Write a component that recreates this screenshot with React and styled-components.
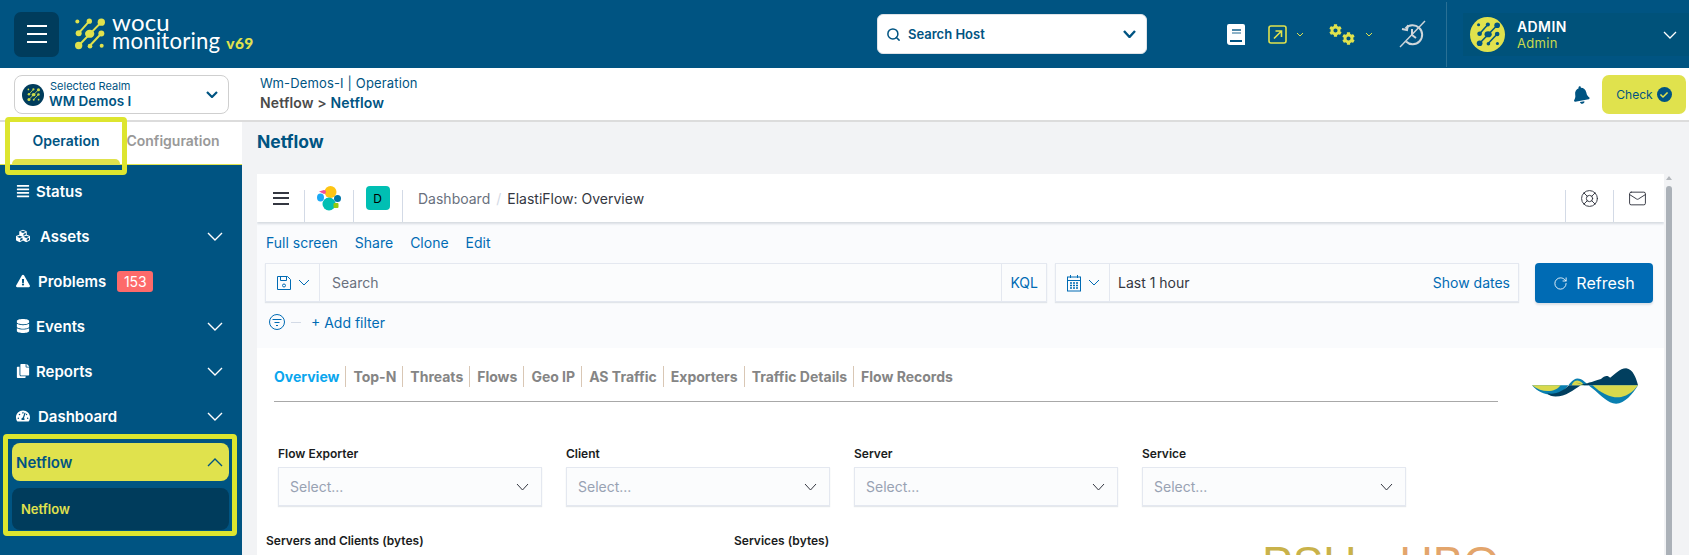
import React from 'react';
import styled, { createGlobalStyle } from 'styled-components';
import { FaAlignJustify, FaCubes, FaExclamationTriangle, FaDatabase, FaCopy, FaTachometerAlt, FaCog, FaBell, FaCheck } from 'react-icons/fa';
import { LifeBuoy, Mail, Search, RotateCw } from 'lucide-react';

const BLUE = '#005482';
const DARK = '#003c5c';
const YEL = '#e0e24d';
const MARK = '#dde52f';
const FONT = `Inter, "Noto Sans", sans-serif`;

const Global = createGlobalStyle`
  html, body { margin: 0; padding: 0; height: 100%; overflow: hidden; background: #f2f3f5; }
  body { font-family: ${FONT}; }
  * { box-sizing: border-box; }
`;

const Page = styled.div`
  width: 1689px; height: 555px; overflow: hidden; display: flex; flex-direction: column;
`;

/* header */
const Header = styled.header`
  height: 68px; flex: none; background: ${BLUE}; display: flex;
`;
const Brand = styled.div`
  width: 877px; padding-left: 14px; display: flex; align-items: center; gap: 15px;
`;
const MenuBtn = styled.button`
  width: 45px; height: 45px; border: 0; border-radius: 7px; background: ${DARK};
  display: flex; flex-direction: column; gap: 6px; align-items: center; justify-content: center; padding: 0;
  span { width: 20px; height: 2px; background: #fff; display: block; }
`;
const LogoGroup = styled.div`
  display: flex; align-items: center;
`;
const LogoText = styled.div`
  margin: 0 0 4px 7px; color: #fff; font-family: Lato, sans-serif;
  display: flex; flex-direction: column;
`;
const LogoWord = styled.div`
  font-size: ${p => p.$fs}px; line-height: 19px; letter-spacing: ${p => p.$ls}px; font-weight: 400;
`;
const LogoVer = styled.span`
  color: ${YEL}; font-size: 15.5px; font-weight: 900; margin-left: 6px; letter-spacing: 0.3px;
`;
const HostSearch = styled.div`
  width: 270px; height: 40px; margin-top: 14px; background: #fff; border-radius: 6px; border: 1px solid #dfe3e8;
  display: flex; align-items: center; padding: 0 10px 0 8px; color: ${BLUE};
  font-size: 13px; font-weight: 600; gap: 7px;
  span { flex: 1; }
`;
const HeaderTools = styled.div`
  width: 299px; display: flex; align-items: center; padding-left: 80px; color: #fff;
`;
const ToolGap = styled.span`
  display: inline-flex; margin-left: ${p => p.$ml}px;
`;
const Gears = styled.span`
  display: inline-flex; height: 21px; margin-left: 25px; color: ${YEL};
  svg:first-child { align-self: flex-start; }
  svg:last-child { align-self: flex-end; }
`;
const UserArea = styled.div`
  flex: 1; border-left: 1px solid #2a7095; margin: 2px 0 1px; display: flex; align-items: center; padding-left: 16px;
`;
const UserPanel = styled.div`
  flex: 1; height: 43px; background: #00527a; display: flex; align-items: center; padding: 0 12px 0 7px;
`;
const Avatar = styled.div`
  width: 35px; height: 35px; border-radius: 50%; background: ${YEL}; display: flex; align-items: center; justify-content: center; flex: none;
`;
const UserText = styled.div`
  margin-left: 12px; flex: 1; display: flex; flex-direction: column; gap: 1px;
  b { color: #fff; font-size: 14px; line-height: 16px; font-weight: 600; letter-spacing: .4px; }
  span { color: #c9da4e; font-size: 13px; line-height: 14px; letter-spacing: .3px; }
`;

/* sub bar */
const SubBar = styled.div`
  height: 54px; flex: none; background: #fff; border-bottom: 2px solid #dcdcdc; display: flex; align-items: flex-start;
`;
const RealmCell = styled.div`
  width: 242px; flex: none; padding: 7px 0 0 14px;
`;
const Realm = styled.div`
  width: 215px; height: 39px; border: 1px solid #cfcfcf; border-radius: 8px; display: flex; align-items: center; padding: 0 10px 0 7px;
`;
const RealmBadge = styled.div`
  width: 22px; height: 22px; border-radius: 50%; background: ${DARK}; flex: none; display: flex; align-items: center; justify-content: center;
`;
const RealmText = styled.div`
  flex: 1; margin-left: 5px; display: flex; flex-direction: column; color: ${BLUE};
  small { font-size: 11px; line-height: 13px; margin-left: 1px; }
  b { font-size: 13.5px; line-height: 16px; font-weight: 600; }
`;
const Crumbs = styled.div`
  flex: 1; padding: 5px 0 0 18px; font-size: 13px; line-height: 20px; color: ${BLUE}; letter-spacing: .15px;
  b { font-weight: 600; display: block; font-size: 14px; letter-spacing: .15px; }
  i { font-style: normal; color: #4a4a4a; }
`;
const Actions = styled.div`
  display: flex; align-items: center; height: 52px; padding: 7px 3px 6px 0; color: ${BLUE};
`;
const Bell = styled(FaBell)`
  transform: rotate(-10deg);
`;
const CheckBtn = styled.div`
  width: 84px; height: 39px; margin-left: 12px; background: ${YEL}; border-radius: 7px; display: flex; align-items: center; justify-content: center; gap: 4px;
  font-size: 12px; color: ${BLUE};
`;
const CheckDot = styled.span`
  width: 15px; height: 15px; border-radius: 50%; background: ${BLUE}; display: flex; align-items: center; justify-content: center; color: #fff;
`;

/* body */
const Body = styled.div`
  flex: 1; min-height: 0; display: flex;
`;
const Side = styled.aside`
  width: 242px; flex: none; background: ${BLUE}; position: relative; display: flex; flex-direction: column;
`;
const Tabs = styled.div`
  height: 43px; background: #fff; border-bottom: 1px solid ${YEL}; display: flex; flex: none;
`;
const Tab = styled.div`
  width: ${p => p.$w}px; margin-left: ${p => p.$ml || 0}px; text-align: center; padding-top: 10px; font-size: 14px; font-weight: 600; position: relative;
  color: ${p => (p.$on ? BLUE : '#999')};
  ${p => p.$on && `&::after { content: ''; position: absolute; left: 12px; right: 12px; bottom: -1px; height: 6px; background: ${YEL}; border-radius: 5px 5px 0 0; }`}
`;
const Nav = styled.nav`
  display: flex; flex-direction: column; gap: 7px; padding: 7px 13px 0 12px;
`;
const NavRow = styled.div`
  height: 38px; flex: none; display: flex; align-items: center; padding: 0 6px 0 4px;
  gap: ${p => p.$gap || 8}px; border-radius: 8px;
  font-size: 15px; font-weight: 600;
  color: ${p => (p.$open ? BLUE : '#fff')};
  background: ${p => (p.$open ? YEL : 'transparent')};
  margin-top: ${p => (p.$open ? 1 : 0)}px;
`;
const NavLabel = styled.span`
  flex: ${p => (p.$grow ? 1 : 'none')};
`;
const Badge = styled.span`
  background: #fd6a6a; color: #fff; border-radius: 3px; font-size: 14px; font-weight: 400; width: 36px; height: 21px;
  display: flex; align-items: center; justify-content: center; margin-left: 3px;
`;
const SubItem = styled.div`
  height: 42px; border-radius: 8px; background: ${DARK}; color: ${YEL}; font-size: 13px; font-weight: 600;
  display: flex; align-items: center; padding-left: 9px;
`;
const MarkBox = styled.div`
  position: absolute; left: ${p => p.$x}px; top: ${p => p.$y}px; width: ${p => p.$w}px; height: ${p => p.$h}px;
  border: 5px solid ${MARK}; border-radius: 4px; pointer-events: none;
`;

/* main */
const Main = styled.main`
  flex: 1; min-width: 0; display: flex; flex-direction: column; background: #f2f3f5;
`;
const Title = styled.h1`
  margin: 0; height: 52px; flex: none; padding: 8px 0 0 15px; font-size: 17.5px; line-height: 24px; font-weight: 700; color: ${BLUE};
`;
const Frame = styled.div`
  flex: 1; min-height: 0; display: flex; margin-left: 15px;
`;
const Kibana = styled.div`
  width: 1407px; flex: none; background: #fff; overflow: hidden;
`;
const Scroll = styled.div`
  flex: 1; padding: 2px 0 0 2px; display: flex; flex-direction: column;
  i { width: 0; height: 0; border: 3px solid transparent; border-top: 0; border-bottom: 4px solid #b4b8bd; margin-left: 0; }
  b { display: block; width: 6px; flex: 1; margin-top: 6px; background: #abb1b8; border-radius: 3px 3px 0 0; }
`;
const TopNav = styled.div`
  height: 48px; background: #fff; box-shadow: 0 2px 2px rgba(152,162,179,.35); display: flex; align-items: center; padding-right: 3px;
  position: relative; z-index: 1;
`;
const NavCell = styled.div`
  width: ${p => p.$w}px; height: 48px; flex: none; display: flex; align-items: center; justify-content: center;
  ${p => p.$grow && 'flex: 1; justify-content: flex-start; padding-left: 16px; gap: 5px;'}
  background: ${p => p.$plain ? 'none' : 'linear-gradient(#d3dae6,#d3dae6) left bottom / 1px 32px no-repeat'};
  color: #343741; font-size: 14px;
  em { font-style: normal; color: #69707d; }
  u { text-decoration: none; color: #d3dae6; margin: 0 1px; }
`;
const Burger = styled.div`
  width: 16px; display: flex; flex-direction: column; gap: 3.5px;
  span { height: 2px; background: #343741; display: block; }
`;
const Space = styled.div`
  width: 24px; height: 24px; border-radius: 4px; background: #00bfb3; color: #000; font-size: 12px; display: flex; align-items: center; justify-content: center;
`;
const ToolArea = styled.div`
  height: 126px; background: #fafbfd; padding: 12px 8px 0 8px;
`;
const LinkRow = styled.div`
  height: 18px; display: flex; gap: 17px; padding-left: 1px; font-size: 14px; line-height: 18px; color: #006bb4;
`;
const BarRow = styled.div`
  display: flex; margin-top: 11px; height: 40px;
`;
const Bar = styled.div`
  width: ${p => p.$w}px; margin-right: ${p => p.$mr}px; flex: none; height: 39px; border: 1px solid #e4e8f0; display: flex; align-items: center;
  box-shadow: 0 1px 1px rgba(152,162,179,.25); background: #fbfcfd; font-size: 14px;
`;
const Prepend = styled.div`
  width: 54px; height: 100%; flex: none; border-right: 1px solid #e4e8f0; display: flex; align-items: center; justify-content: center; gap: 6px; color: #006bb4;
`;
const BarText = styled.div`
  flex: 1; padding-left: ${p => p.$pl}px; color: ${p => p.$c};
`;
const BarLink = styled.div`
  height: 100%; display: flex; align-items: center; padding: 0 8px; color: #006bb4;
  ${p => p.$div && 'border-left: 1px solid #e4e8f0;'}
`;
const RefreshBtn = styled.div`
  width: 118px; height: 40px; background: #006bb4; color: #fff; border-radius: 4px; font-size: 16px; display: flex; align-items: center; justify-content: center; gap: 8px;
  box-shadow: 0 2px 2px rgba(152,162,179,.3);
`;
const FilterRow = styled.div`
  display: flex; align-items: center; height: 22px; margin-top: 8px; padding-left: 4px; color: #006bb4; font-size: 14px;
  hr { width: 10px; height: 1px; background: #d3dae6; border: 0; margin: 0 10px 0 6px; }
`;
const Dash = styled.div`
  background: #fff;
`;
const TabHead = styled.div`
  display: flex; padding: 18px 0 0 17px; height: 64px;
`;
const TabCol = styled.div`
  width: 1224px; flex: none; height: 36px; border-bottom: 1px solid #a8a8a8; display: flex; align-items: flex-start;
`;
const DTab = styled.span`
  font-size: 14px; font-weight: 700; line-height: 21px; white-space: nowrap;
  color: ${p => (p.$on ? '#0aa6ee' : '#858585')};
  padding-right: 6px; margin-right: 7px;
  border-right: ${p => (p.$last ? '0' : '1px solid #d9c7b5')};
`;
const Wave = styled.div`
  margin: 2px 0 0 34px;
`;
const FilterGrid = styled.div`
  display: flex; padding: 34px 0 0 21px; gap: 24px;
`;
const Field = styled.div`
  width: 264px; flex: none;
`;
const FieldLabel = styled.div`
  font-size: 12px; font-weight: 600; line-height: 16px; color: #1a1c21; height: 21px;
`;
const SelectBox = styled.div`
  height: 39px; border: 1px solid #e4e8f0; background: #fbfcfd; box-shadow: 0 1px 1px rgba(152,162,179,.25);
  display: flex; align-items: center; justify-content: space-between; padding: 0 12px 0 11px; font-size: 14px; color: #98a2b3;
`;
const TitlesRow = styled.div`
  display: flex; padding: 27px 0 0 9px; align-items: flex-start;
`;
const PanelTitle = styled.div`
  width: ${p => p.$w}px; flex: none; font-size: 12px; font-weight: 600; line-height: 16px; color: #1a1c21;
`;
const Big = styled.div`
  font-family: "Liberation Sans", sans-serif; font-size: 46px; line-height: 46px; font-weight: 400; white-space: pre; margin-top: 7px;
  span + span { margin-left: 43px; }
`;
const BigPart = styled.span`
  color: ${p => p.$c};
`;

/* drawings */
const Chevron = ({ w = 16, h = 9, c = '#fff', sw = 1.4 }) => (
  <svg width={w} height={h} viewBox={`0 0 ${w} ${h}`} fill="none">
    <polyline points={`1,1 ${w / 2},${h - 1} ${w - 1},1`} stroke={c} strokeWidth={sw} />
  </svg>
);
const ChevronUp = ({ w = 16, h = 9, c = '#fff', sw = 1.4 }) => (
  <svg width={w} height={h} viewBox={`0 0 ${w} ${h}`} fill="none">
    <polyline points={`1,${h - 1} ${w / 2},1 ${w - 1},${h - 1}`} stroke={c} strokeWidth={sw} />
  </svg>
);
const Mark = ({ s = 31, c = YEL }) => (
  <svg width={s} height={s * 32 / 31} viewBox="0 0 93 95" fill={c} stroke={c}>
    <g strokeWidth="6" fill="none">
      <line x1="82" y1="12" x2="14" y2="82" />
      <line x1="46" y1="9" x2="14" y2="45" />
      <line x1="82" y1="46" x2="48" y2="82" />
    </g>
    <g stroke="none">
      <circle cx="10" cy="10" r="6" />
      <circle cx="46" cy="9" r="8" />
      <circle cx="82" cy="12" r="11" />
      <circle cx="14" cy="45" r="9" />
      <ellipse cx="47" cy="47" rx="14" ry="12" />
      <circle cx="82" cy="46" r="9" />
      <circle cx="14" cy="82" r="11" />
      <circle cx="48" cy="84" r="7" />
      <circle cx="83" cy="83" r="6" />
    </g>
  </svg>
);
const BookIcon = () => (
  <svg width="18" height="21" viewBox="0 0 18 21">
    <path d="M2 0h14a2 2 0 0 1 2 2v19H3a3 3 0 0 1-3-3V2a2 2 0 0 1 2-2z" fill="#fff" />
    <rect x="5" y="5" width="9" height="2" fill="#4d87a8" />
    <rect x="5" y="8" width="9" height="2" fill="#8fb3c8" />
    <rect x="3" y="16" width="12" height="2" fill={BLUE} />
  </svg>
);
const OpenIcon = () => (
  <svg width="19" height="19" viewBox="0 0 19 19" fill="none" stroke={YEL} strokeWidth="1.6">
    <rect x="1" y="1" width="17" height="17" rx="2" />
    <path d="M6 13.5 13 6.5M7.5 6h6v6" />
  </svg>
);
const NoHistory = () => (
  <svg width="28" height="28" viewBox="0 0 28 28" fill="none" stroke="#cfd6da" strokeWidth="2">
    <path d="M7.5 8.5A9.5 9.5 0 1 1 8 21.5" />
    <path d="M4 9l5 1 1-5" />
    <path d="M14 9v6l4 3" />
    <path d="M27 1 2 27" strokeWidth="1.4" />
  </svg>
);
const ElasticLogo = () => (
  <svg width="25" height="25" viewBox="0 0 25 25">
    <circle cx="14.5" cy="6" r="6" fill="#fec514" />
    <circle cx="13" cy="18" r="6.5" fill="#00bfb3" />
    <path d="M2 6.5 7 5a2 2 0 0 1 0 4z" fill="#f04e98" transform="translate(1 -1)" />
    <ellipse cx="4.5" cy="11.5" rx="3.5" ry="4" fill="#1ba9f5" />
    <ellipse cx="21.5" cy="12.5" rx="3.5" ry="3.5" fill="#0077a8" />
    <rect x="17.5" y="17" width="5" height="5" rx="1" fill="#93c90e" />
  </svg>
);
const SaveIcon = () => (
  <svg width="16" height="16" viewBox="0 0 16 16" fill="none" stroke="#006bb4">
    <path d="M1.5 1.5h10l3 3v10h-13z" /><path d="M4.5 1.5v4h6v-4" /><circle cx="8" cy="10.5" r="1.5" />
  </svg>
);
const CalIcon = () => (
  <svg width="16" height="18" viewBox="0 0 16 18" fill="none" stroke="#006bb4">
    <rect x="1.5" y="3" width="13" height="14" /><path d="M1.5 6.5h13M4.5 1v3M11.5 1v3" />
    <path d="M4 9h8M4 11.5h8M4 14h8" strokeDasharray="2 1" strokeWidth="1.6" />
  </svg>
);
const FilterIcon = () => (
  <svg width="16" height="16" viewBox="0 0 16 16" fill="none" stroke="#006bb4">
    <circle cx="8" cy="8" r="7.5" /><path d="M3.5 5.5h9M5.5 8.5h5M7 11.5h2" />
  </svg>
);
const WaveLogo = () => (
  <svg width="106" height="36" viewBox="0 0 315 105">
    <path d="M0 50C30 85 75 85 100 60C112 46 122 30 135 30C150 30 162 45 180 60C205 80 225 105 250 105C275 105 300 75 315 50Z" fill="#0a7fb0" />
    <path d="M0 50H85C70 72 30 74 0 50Z" fill="#d9d94c" />
    <path d="M45 74C70 80 95 65 110 50H145C125 62 100 84 70 84C60 84 50 80 45 74Z" fill="#013f5f" />
    <path d="M118 50C122 40 128 36 135 36C143 36 150 43 155 50Z" fill="#d9d94c" />
    <path d="M130 42C145 46 152 50 170 42C180 42 190 35 205 32C215 22 225 20 232 28C245 20 260 0 280 0C300 2 310 30 315 50H155Z" fill="#013f5f" />
    <path d="M180 50H315C300 70 285 80 265 85C240 90 205 75 180 50Z" fill="#d9d94c" />
  </svg>
);

const tabs = ['Overview', 'Top-N', 'Threats', 'Flows', 'Geo IP', 'AS Traffic', 'Exporters', 'Traffic Details', 'Flow Records'];
const fields = ['Flow Exporter', 'Client', 'Server', 'Service'];
const items = [
  { label: 'Status', Icon: FaAlignJustify, gap: 6 },
  { label: 'Assets', Icon: FaCubes, gap: 10, more: true },
  { label: 'Problems', Icon: FaExclamationTriangle, gap: 8, badge: '153' },
  { label: 'Events', Icon: FaDatabase, gap: 6, more: true },
  { label: 'Reports', Icon: FaCopy, gap: 6, more: true },
  { label: 'Dashboard', Icon: FaTachometerAlt, gap: 8, more: true },
];

export default function App() {
  return (
    <Page>
      <Global />
      <Header>
        <Brand>
          <MenuBtn><span /><span /><span /></MenuBtn>
          <LogoGroup>
            <Mark />
            <LogoText>
              <LogoWord $fs={24} $ls={0.2}>wocu</LogoWord>
              <LogoWord $fs={22.2} $ls={0.2}>monitoring<LogoVer>v69</LogoVer></LogoWord>
            </LogoText>
          </LogoGroup>
        </Brand>
        <HostSearch>
          <Search size={15} strokeWidth={2.4} />
          <span>Search Host</span>
          <Chevron w={13} h={8} c={BLUE} sw={2.4} />
        </HostSearch>
        <HeaderTools>
          <BookIcon />
          <ToolGap $ml={23}><OpenIcon /></ToolGap>
          <ToolGap $ml={9}><Chevron w={8} h={5} c={YEL} sw={1} /></ToolGap>
          <Gears><FaCog size={13} /><FaCog size={13} /></Gears>
          <ToolGap $ml={10}><Chevron w={8} h={5} c={YEL} sw={1} /></ToolGap>
          <ToolGap $ml={25}><NoHistory /></ToolGap>
        </HeaderTools>
        <UserArea>
          <UserPanel>
            <Avatar><Mark s={24} c={BLUE} /></Avatar>
            <UserText><b>ADMIN</b><span>Admin</span></UserText>
            <Chevron w={14} h={8} c="#fff" sw={1.3} />
          </UserPanel>
        </UserArea>
      </Header>
      <SubBar>
        <RealmCell>
          <Realm>
            <RealmBadge><Mark s={13} c="#c9da4e" /></RealmBadge>
            <RealmText><small>Selected Realm</small><b>WM Demos I</b></RealmText>
            <Chevron w={12} h={7} c={BLUE} sw={2.2} />
          </Realm>
        </RealmCell>
        <Crumbs>
          Wm-Demos-I | Operation
          <b><i>Netflow &gt;</i> Netflow</b>
        </Crumbs>
        <Actions>
          <Bell size={18} />
          <CheckBtn>Check<CheckDot><FaCheck size={8} color={YEL} /></CheckDot></CheckBtn>
        </Actions>
      </SubBar>
      <Body>
        <Side>
          <Tabs>
            <Tab $on $w={132}>Operation</Tab>
            <Tab $w={122} $ml={-20}>Configuration</Tab>
          </Tabs>
          <Nav>
            {items.map(({ label, Icon, gap, more, badge }) => (
              <NavRow key={label} $gap={gap}>
                <Icon size={14} />
                <NavLabel $grow={more}>{label}</NavLabel>
                {badge && <Badge>{badge}</Badge>}
                {more && <Chevron />}
              </NavRow>
            ))}
            <NavRow $open>
              <NavLabel $grow>Netflow</NavLabel>
              <ChevronUp c={BLUE} />
            </NavRow>
            <SubItem>Netflow</SubItem>
          </Nav>
          <MarkBox $x={5} $y={-5} $w={122} $h={58} />
          <MarkBox $x={3} $y={312} $w={234} $h={102} />
        </Side>
        <Main>
          <Title>Netflow</Title>
          <Frame>
            <Kibana>
              <TopNav>
                <NavCell $w={47} $plain><Burger><span /><span /><span /></Burger></NavCell>
                <NavCell $w={49}><ElasticLogo /></NavCell>
                <NavCell $w={49}><Space>D</Space></NavCell>
                <NavCell $grow><em>Dashboard</em><u>/</u><span>ElastiFlow: Overview</span></NavCell>
                <NavCell $w={48}><LifeBuoy size={19} strokeWidth={1.2} /></NavCell>
                <NavCell $w={48}><Mail size={19} strokeWidth={1.2} /></NavCell>
              </TopNav>
              <ToolArea>
                <LinkRow>
                  <span>Full screen</span><span>Share</span><span>Clone</span><span>Edit</span>
                </LinkRow>
                <BarRow>
                  <Bar $w={782} $mr={8}>
                    <Prepend><SaveIcon /><Chevron w={12} h={7} c="#006bb4" sw={1} /></Prepend>
                    <BarText $pl={12} $c="#69707d">Search</BarText>
                    <BarLink $div>KQL</BarLink>
                  </Bar>
                  <Bar $w={464} $mr={16}>
                    <Prepend><CalIcon /><Chevron w={12} h={7} c="#006bb4" sw={1} /></Prepend>
                    <BarText $pl={8} $c="#343741">Last 1 hour</BarText>
                    <BarLink>Show dates</BarLink>
                  </Bar>
                  <RefreshBtn><RotateCw size={15} strokeWidth={1.4} />Refresh</RefreshBtn>
                </BarRow>
                <FilterRow>
                  <FilterIcon /><hr /><span>+ Add filter</span>
                </FilterRow>
              </ToolArea>
              <Dash>
                <TabHead>
                  <TabCol>
                    {tabs.map((t, i) => (
                      <DTab key={t} $on={i === 0} $last={i === tabs.length - 1}>{t}</DTab>
                    ))}
                  </TabCol>
                  <Wave><WaveLogo /></Wave>
                </TabHead>
                <FilterGrid>
                  {fields.map(f => (
                    <Field key={f}>
                      <FieldLabel>{f}</FieldLabel>
                      <SelectBox>Select...<Chevron w={13} h={8} c="#343741" sw={1} /></SelectBox>
                    </Field>
                  ))}
                </FilterGrid>
                <TitlesRow>
                  <PanelTitle $w={468}>Servers and Clients (bytes)</PanelTitle>
                  <PanelTitle $w={528}>Services (bytes)</PanelTitle>
                  <Big><BigPart $c="#c9b24a">PSU</BigPart><BigPart $c="#e3a56c">UBO</BigPart></Big>
                </TitlesRow>
              </Dash>
            </Kibana>
            <Scroll><i /><b /></Scroll>
          </Frame>
        </Main>
      </Body>
    </Page>
  );
}
